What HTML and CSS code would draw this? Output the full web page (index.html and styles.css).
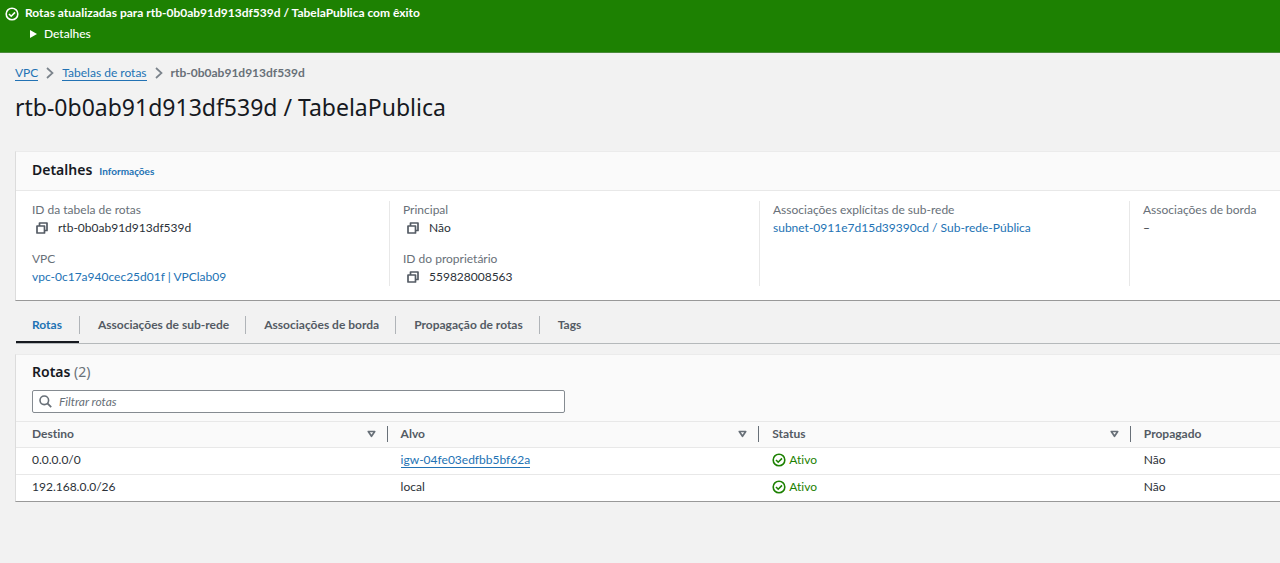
FILE: index.html
```html
<!DOCTYPE html>
<html lang="pt-BR">
<head>
<meta charset="utf-8">
<meta name="viewport" content="width=device-width, initial-scale=1">
<title>rtb-0b0ab91d913df539d / TabelaPublica</title>
<link rel="stylesheet" href="styles.css">
</head>
<body>
<svg class="sprite" aria-hidden="true">
  <symbol id="check" viewBox="0 0 14 14"><circle cx="7" cy="7" r="5.8" fill="none" stroke="currentColor" stroke-width="1.6"/><path d="M4 7l2.2 2.2L10 5.4" fill="none" stroke="currentColor" stroke-width="1.6"/></symbol>
  <symbol id="copy" viewBox="0 0 12 12"><path d="M3.5 4V1h7.500v7.500H9M1 4h7.500v7H1z" fill="none" stroke="currentColor" stroke-width="1.700" stroke-linejoin="round"/></symbol>
  <symbol id="chevron" viewBox="0 0 8 12"><path d="M1 1l5.500 5L1 11" fill="none" stroke="currentColor" stroke-width="1.700"/></symbol>
  <symbol id="sort" viewBox="0 0 9 8"><path d="M1.300 1.500h6.400L4.500 6.300z" fill="none" stroke="currentColor" stroke-width="1.700" stroke-linejoin="round"/></symbol>
</svg>
<section class="flash" role="status">
  <svg class="icon-check"><use href="#check"/></svg>
  <div class="flash-body">
    <strong class="flash-title">Rotas atualizadas para rtb-0b0ab91d913df539d / TabelaPublica com êxito</strong>
    <button class="expander" type="button" aria-expanded="false"><svg class="icon-expand" viewBox="0 0 7 8"><path d="M0 0l7 4-7 4z" fill="currentColor"/></svg>Detalhes</button>
  </div>
</section>
<main class="page">
  <nav class="breadcrumbs" aria-label="Trilha">
    <a class="underlined" href="#vpc">VPC</a>
    <svg class="icon-chevron"><use href="#chevron"/></svg>
    <a class="underlined" href="#tabelas">Tabelas de rotas</a>
    <svg class="icon-chevron"><use href="#chevron"/></svg>
    <span class="current">rtb-0b0ab91d913df539d</span>
  </nav>
  <h1 class="title">rtb-0b0ab91d913df539d / TabelaPublica</h1>

  <section class="panel">
    <header class="panel-head">
      <h2 class="heading">Detalhes</h2>
      <a class="info" href="#info">Informações</a>
    </header>
    <div class="details">
      <dl class="column">
        <div><dt>ID da tabela de rotas</dt><dd><button class="copy" type="button" aria-label="Copiar ID da tabela"><svg class="icon-copy"><use href="#copy"/></svg></button>rtb-0b0ab91d913df539d</dd></div>
        <div><dt>VPC</dt><dd><a href="#vpc-id">vpc-0c17a940cec25d01f | VPClab09</a></dd></div>
      </dl>
      <dl class="column">
        <div><dt>Principal</dt><dd><button class="copy" type="button" aria-label="Copiar principal"><svg class="icon-copy"><use href="#copy"/></svg></button>Não</dd></div>
        <div><dt>ID do proprietário</dt><dd><button class="copy" type="button" aria-label="Copiar ID do proprietário"><svg class="icon-copy"><use href="#copy"/></svg></button>559828008563</dd></div>
      </dl>
      <dl class="column">
        <div><dt>Associações explícitas de sub-rede</dt><dd><a href="#subnet">subnet-0911e7d15d39390cd / Sub-rede-Pública</a></dd></div>
      </dl>
      <dl class="column">
        <div><dt>Associações de borda</dt><dd>–</dd></div>
      </dl>
    </div>
  </section>

  <div class="tabs" role="tablist">
    <button class="tab active" type="button" role="tab" aria-selected="true">Rotas</button>
    <button class="tab" type="button" role="tab" aria-selected="false">Associações de sub-rede</button>
    <button class="tab" type="button" role="tab" aria-selected="false">Associações de borda</button>
    <button class="tab" type="button" role="tab" aria-selected="false">Propagação de rotas</button>
    <button class="tab" type="button" role="tab" aria-selected="false">Tags</button>
  </div>

  <section class="panel">
    <header class="routes-head">
      <h2 class="heading">Rotas <span class="count">(2)</span></h2>
      <label class="search">
        <svg class="icon-search" viewBox="0 0 13 13"><circle cx="5.300" cy="5.300" r="4.300" fill="none" stroke="currentColor" stroke-width="1.600"/><path d="M8.400 8.400l3.800 3.800" stroke="currentColor" stroke-width="1.800"/></svg>
        <input class="search-input" type="search" placeholder="Filtrar rotas" aria-label="Filtrar rotas">
      </label>
    </header>
    <table class="routes">
      <thead>
        <tr>
          <th scope="col"><div class="th">Destino<svg class="icon-sort"><use href="#sort"/></svg></div></th>
          <th scope="col"><div class="th">Alvo<svg class="icon-sort"><use href="#sort"/></svg></div></th>
          <th scope="col"><div class="th">Status<svg class="icon-sort"><use href="#sort"/></svg></div></th>
          <th class="last" scope="col"><div class="th">Propagado</div></th>
        </tr>
      </thead>
      <tbody>
        <tr>
          <td>0.0.0.0/0</td>
          <td><a class="underlined" href="#igw">igw-04fe03edfbb5bf62a</a></td>
          <td><span class="status"><svg class="icon-check"><use href="#check"/></svg>Ativo</span></td>
          <td>Não</td>
        </tr>
        <tr>
          <td>192.168.0.0/26</td>
          <td>local</td>
          <td><span class="status"><svg class="icon-check"><use href="#check"/></svg>Ativo</span></td>
          <td>Não</td>
        </tr>
      </tbody>
    </table>
  </section>
</main>
</body>
</html>
```
FILE: styles.css
```css
* { box-sizing: border-box; }
body {
  margin: 0;
  background: #f2f2f2;
  color: #2b3138;
  font: 12px/18px Lato, "Noto Sans", sans-serif;
  font-variant-ligatures: none;
}
button {
  margin: 0;
  padding: 0;
  border: 0;
  background: none;
  color: inherit;
  font: inherit;
}
a { color: #2272b4; text-decoration: none; }
svg { flex: none; display: block; }
.sprite { position: absolute; width: 0; height: 0; }
.icon-check { width: 14px; height: 14px; }
.icon-copy { width: 12px; height: 12px; }
.icon-chevron { width: 8px; height: 12px; color: #7b838b; }
.icon-sort { width: 9px; height: 8px; color: #687078; }
.icon-expand { width: 7px; height: 8px; }
.icon-search { width: 13px; height: 13px; color: #687078; }
.underlined { border-bottom: 1px solid #2272b4; line-height: 14px; }

.flash {
  display: flex;
  gap: 6px;
  padding: 4px 5px 9px;
  background: #1d8102;
  border-bottom: 1px solid #4c8b3c;
  color: #fff;
}
.flash .icon-check { margin-top: 3px; }
.flash-body { display: flex; flex-direction: column; align-items: flex-start; gap: 3px; }
.flash-title { font-weight: 700; }
.expander { display: flex; align-items: center; gap: 7px; padding-left: 5px; font-weight: 500; }

.page { padding: 11px 0 0 15px; }
.breadcrumbs { display: flex; align-items: center; gap: 8px; color: #687078; }
.current { font-weight: 700; }
.title {
  margin: 9px 0 28px;
  color: #16191f;
  font-family: "Noto Sans", sans-serif;
  font-size: 23px;
  line-height: 32px;
  font-weight: 400;
}

.panel {
  background: #fff;
  border: solid;
  border-width: 1px 0 1px 1px;
  border-color: #ebebeb #ebebeb #999 #dcdcdc;
}
.panel-head {
  display: flex;
  align-items: baseline;
  gap: 7px;
  padding: 7px 16px 9px;
  background: #fafafa;
  border-bottom: 1px solid #e8e8e8;
}
.heading {
  margin: 0;
  color: #16191f;
  font-family: "Noto Sans", sans-serif;
  font-size: 14px;
  line-height: 22px;
  font-weight: 600;
}
.info { font-size: 10px; font-weight: 700; }
.details {
  display: grid;
  grid-template-columns: 357fr 370fr 370fr 151fr;
  padding: 10px 0 14px 16px;
}
.column { display: flex; flex-direction: column; gap: 13px; margin: 0; white-space: nowrap; }
.column + .column { padding-left: 13px; border-left: 1px solid #e8e8e8; }
dt { color: #687078; }
dd { display: flex; align-items: center; margin: 0; }
.copy { margin: 0 10px 0 4px; color: #545b64; }

.tabs { display: flex; margin: 0 0 10px 1px; padding-top: 8px; border-bottom: 1px solid #b5b9bb; }
.tab {
  display: flex;
  align-items: center;
  height: 34px;
  color: #545b64;
  font-weight: 700;
  border-bottom: 2px solid transparent;
}
.tab::before { content: ""; height: 18px; margin-right: 18px; border-left: 1px solid #b0b4b8; }
.tab + .tab { margin-left: 16px; }
.tab.active { padding: 0 17px 0 16px; color: #2272b4; border-color: #16191f; }
.tab.active::before { display: none; }
.tab.active + .tab { margin-left: 0; }

.routes-head { padding: 6px 16px 8px; background: #fafafa; }
.count { color: #687078; font-weight: 400; }
.search {
  display: flex;
  align-items: center;
  gap: 7px;
  width: 43.3%;
  min-width: 240px;
  height: 23px;
  margin-top: 7px;
  padding: 0 6px;
  background: #fff;
  border: 1px solid #858b91;
  border-radius: 2px;
}
.search-input { flex: 1; min-width: 0; padding: 0; border: 0; outline: 0; background: none; font: inherit; }
.search-input::placeholder { color: #687078; font-style: italic; opacity: 1; }

.routes { width: 100%; border-collapse: collapse; table-layout: fixed; }
.routes th { width: 29.4%; padding: 0; background: #fafafa; color: #545b64; font-weight: 700; text-align: left; }
.routes th.last { width: auto; }
.routes tr { border-top: 1px solid #e8e8e8; }
.th {
  display: flex;
  align-items: center;
  justify-content: space-between;
  height: 16px;
  margin: 4px 0 5px;
  padding: 0 11px 0 13px;
  border-right: 1px solid #687078;
}
.last .th { border: 0; }
.routes td { padding: 3px 13px 5px; }
.routes td:first-child, .routes th:first-child .th { padding-left: 16px; }
.status { display: flex; align-items: center; gap: 3px; color: #1d8102; }
```
